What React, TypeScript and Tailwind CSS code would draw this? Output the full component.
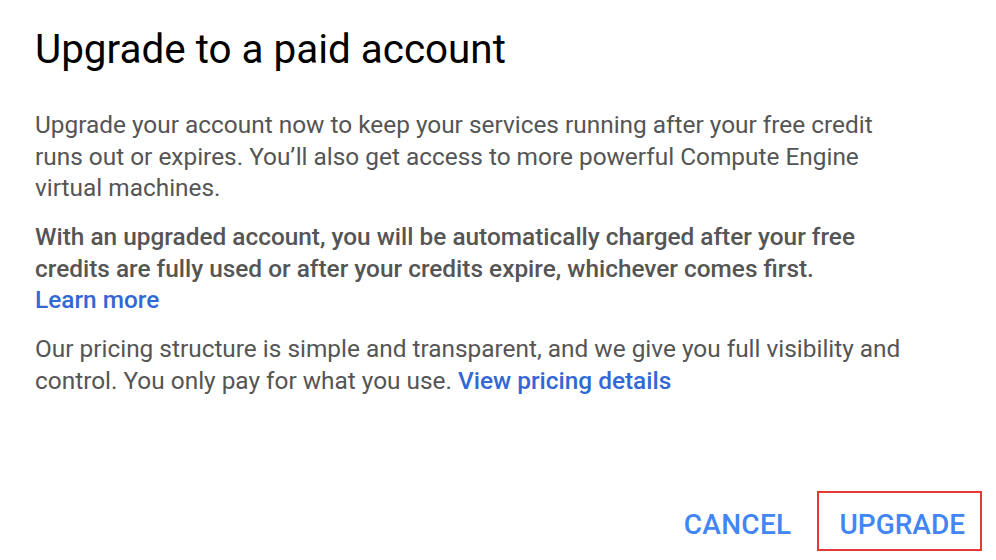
export default function App() {
  return (
    <div className="w-[996px] h-[560px] bg-white font-['Roboto',sans-serif] flex flex-col">
      <div className="pl-[35px] pt-[27px] flex-1">
        <h1 className="text-[40.4px] leading-[46px] font-normal text-black">Upgrade to a paid account</h1>
        <div className="mt-[36px] w-[880px] text-[24.4px] leading-[31.5px] text-[#555555] space-y-[17.5px]">
          <p>
            Upgrade your account now to keep your services running after your free credit runs out or expires.
            You’ll also get access to more powerful Compute Engine virtual machines.
          </p>
          <p className="font-medium">
            With an upgraded account, you will be automatically charged after your free credits are fully used or
            after your credits expire, whichever comes first.
            <br />
            <a className="text-[#3367d6]">Learn more</a>
          </p>
          <p>
            Our pricing structure is simple and transparent, and we give you full visibility and control. You only
            pay for what you use. <a className="text-[#3367d6] font-medium">View pricing details</a>
          </p>
        </div>
      </div>
      <div className="flex justify-end items-center gap-[26px] pr-[14px] pb-[9px]">
        <button className="h-[60px] pt-[8px] text-[28px] font-medium text-[#4285f4] tracking-[0.3px]">CANCEL</button>
        <button className="h-[60px] pt-[8px] pl-[20px] pr-[15px] border-2 border-[#e53935] text-[28px] font-medium text-[#4285f4]">
          UPGRADE
        </button>
      </div>
    </div>
  );
}
